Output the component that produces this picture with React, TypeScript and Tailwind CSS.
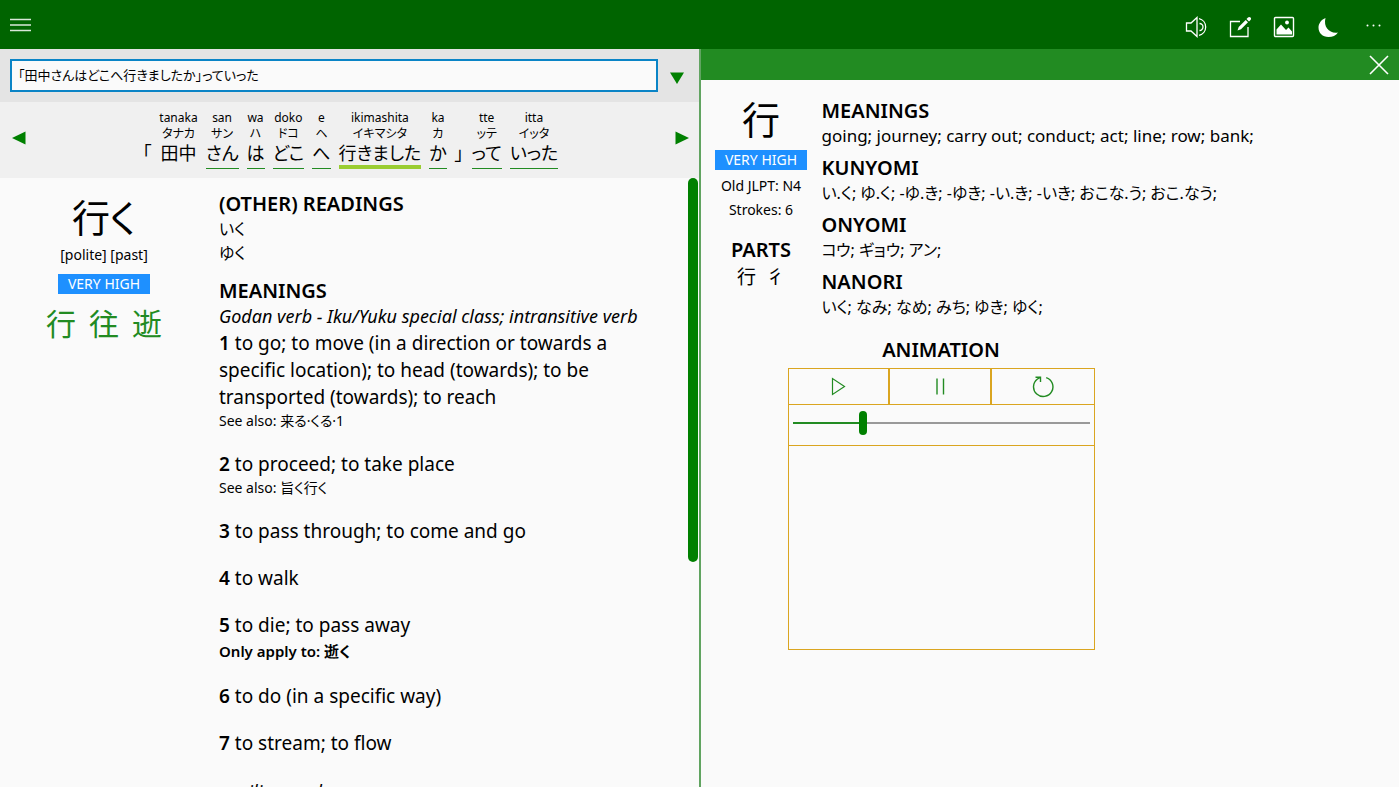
import { useState, type ReactNode } from 'react';

type Token = { romaji?: string; kana?: string; text: string; kind: 'plain' | 'word' | 'active' };

const tokens: Token[] = [
  { text: '「', kind: 'plain' },
  { romaji: 'tanaka', kana: 'タナカ', text: '田中', kind: 'plain' },
  { romaji: 'san', kana: 'サン', text: 'さん', kind: 'word' },
  { romaji: 'wa', kana: 'ハ', text: 'は', kind: 'word' },
  { romaji: 'doko', kana: 'ドコ', text: 'どこ', kind: 'word' },
  { romaji: 'e', kana: 'ヘ', text: 'へ', kind: 'word' },
  { romaji: 'ikimashita', kana: 'イキマシタ', text: '行きました', kind: 'active' },
  { romaji: 'ka', kana: 'カ', text: 'か', kind: 'word' },
  { text: '」', kind: 'plain' },
  { romaji: 'tte', kana: 'ッテ', text: 'って', kind: 'word' },
  { romaji: 'itta', kana: 'イッタ', text: 'いった', kind: 'word' },
];

const underline = {
  plain: '',
  word: 'border-b border-[#228b22]',
  active: 'border-b-4 border-[#9acd32]',
};

const senses: { text: string; seeAlso?: string; only?: string }[] = [
  {
    text: 'to go; to move (in a direction or towards a specific location); to head (towards); to be transported (towards); to reach',
    seeAlso: '来る·くる·1',
  },
  { text: 'to proceed; to take place', seeAlso: '旨く行く' },
  { text: 'to pass through; to come and go' },
  { text: 'to walk' },
  { text: 'to die; to pass away', only: '逝く' },
  { text: 'to do (in a specific way)' },
  { text: 'to stream; to flow' },
];

const meanings = 'going; journey; carry out; conduct; act; line; row; bank;';

const readings = [
  { title: 'KUNYOMI', body: 'い.く; ゆ.く; -ゆ.き; -ゆき; -い.き; -いき; おこな.う; おこ.なう;' },
  { title: 'ONYOMI', body: 'コウ; ギョウ; アン;' },
  { title: 'NANORI', body: 'いく; なみ; なめ; みち; ゆき; ゆく;' },
];

function Heading({ children }: { children: ReactNode }) {
  return <h2 className="text-[20px] leading-[26px] font-semibold">{children}</h2>;
}

function Badge() {
  return (
    <span className="flex h-5 w-[92px] items-center justify-center bg-[#1e90ff] text-[14px] leading-5 text-white">
      VERY HIGH
    </span>
  );
}

function IconButton({ label, children }: { label: string; children: ReactNode }) {
  return (
    <button type="button" aria-label={label} className="flex w-11 items-center justify-center text-white">
      {children}
    </button>
  );
}

function Toolbar() {
  return (
    <header className="flex h-[49px] shrink-0 items-stretch justify-between bg-[#006400] pr-[5px]">
      <button type="button" aria-label="Menu" className="flex w-[42px] items-center justify-center text-[#d9e8d9]">
        <svg width="22" height="14" viewBox="0 0 22 14" stroke="currentColor" strokeWidth="1.300">
          <path d="M0 1.500h21M0 7h21M0 12.500h21" />
        </svg>
      </button>
      <div className="flex pt-1">
        <IconButton label="Read aloud">
          <svg width="22" height="22" viewBox="0 0 22 22" fill="none" stroke="currentColor" strokeWidth="1.300">
            <path d="M1.500 7h4.500L12 1.500v19L6 15H1.500z" />
            <path d="M14.500 7.500a3.500 3.500 0 0 1 0 7" />
            <path d="M14 2.700a8.500 8.500 0 0 1 0 16.600" />
          </svg>
        </IconButton>
        <IconButton label="Edit">
          <svg width="22" height="22" viewBox="0 0 22 22" fill="none" stroke="currentColor" strokeWidth="1.300">
            <path d="M11 5.500H1.500v15h17.500V11" />
            <path d="M8.500 14.500l1.200-3.500 7-7 2.300 2.300-7 7z" fill="currentColor" stroke="none" />
            <path d="M17.500 3l1.500-1.500a1.600 1.600 0 0 1 2.500 2.500L20 5.500z" fill="currentColor" stroke="none" />
          </svg>
        </IconButton>
        <IconButton label="Picture">
          <svg width="22" height="22" viewBox="0 0 22 22" fill="none" stroke="currentColor" strokeWidth="1.400">
            <rect x="1.500" y="1.500" width="19" height="19" rx="1" />
            <path d="M3.500 18.500v-5l4.500-5 5 5.500 2.500-2.500 3.500 4v3z" fill="currentColor" stroke="none" />
            <circle cx="14" cy="6.500" r="1.900" fill="currentColor" stroke="none" />
          </svg>
        </IconButton>
        <IconButton label="Dark mode">
          <svg width="22" height="22" viewBox="0 0 22 22" fill="currentColor">
            <path d="M8.500 2C4.500 3.500 1.500 7.500 1.500 11.500c0 5.500 4 9.500 10 9.500 4 0 7.500-1.500 9.500-4.500-8 1.500-15-5-12.500-14.500z" />
          </svg>
        </IconButton>
        <IconButton label="More">
          <svg width="22" height="22" viewBox="0 0 22 22" fill="currentColor">
            <circle cx="6.500" cy="9.500" r="1" />
            <circle cx="12.500" cy="9.500" r="1" />
            <circle cx="18.500" cy="9.500" r="1" />
          </svg>
        </IconButton>
      </div>
    </header>
  );
}

function SearchRow() {
  return (
    <form className="flex h-[53px] shrink-0 items-center bg-[#e4e4e4] pl-[10px]">
      <input
        type="text"
        aria-label="Sentence"
        defaultValue="「田中さんはどこへ行きましたか」っていった"
        className="h-[33px] min-w-0 flex-1 border-2 border-[#0a84c6] bg-[#fafafa] px-[6px] pb-[2px] text-[13px] text-black outline-none"
      />
      <button type="button" aria-label="History" className="flex w-[41px] justify-center pt-1 pr-[2px] text-[#008000]">
        <svg width="14" height="12" viewBox="0 0 14 12" fill="currentColor">
          <path d="M0 0.500h14L7 12z" />
        </svg>
      </button>
    </form>
  );
}

function TokenStrip() {
  return (
    <div className="flex h-[76px] shrink-0 items-center justify-between bg-[#f0f0f0] pr-[10px] pb-1 pl-3">
      <button type="button" aria-label="Previous" className="text-[#008000]">
        <svg width="14" height="14" viewBox="0 0 14 14" fill="currentColor">
          <path d="M13.500 0.500v13L0 7z" />
        </svg>
      </button>
      <ol className="flex gap-2 pt-[3px]">
        {tokens.map((token, index) => (
          <li key={index} className="flex flex-col items-center text-center">
            <span className="h-4 text-[12px] leading-4">{token.romaji}</span>
            <span className="h-4 text-[12px] leading-4">{token.kana}</span>
            <span className={`h-[27px] w-full text-[18px] leading-[22px] ${underline[token.kind]}`}>{token.text}</span>
          </li>
        ))}
      </ol>
      <button type="button" aria-label="Next" className="text-[#008000]">
        <svg width="14" height="14" viewBox="0 0 14 14" fill="currentColor">
          <path d="M0.500 0.500v13L14 7z" />
        </svg>
      </button>
    </div>
  );
}

function WordEntry() {
  return (
    <article className="relative min-h-0 flex-1 overflow-hidden">
      <div className="flex h-full overflow-hidden pt-[13px] pr-[60px]">
        <div className="flex w-[208px] shrink-0 flex-col items-center">
          <h1 className="text-[38px] leading-[52px]">行く</h1>
          <p className="text-[14px] leading-6">[polite] [past]</p>
          <div className="pt-[7px]">
            <Badge />
          </div>
          <div className="flex gap-[13px] pt-[13px] text-[30px] leading-[34px] text-[#228b22]">
            <a href="#行">行</a>
            <a href="#往">往</a>
            <a href="#逝">逝</a>
          </div>
        </div>
        <div className="min-w-0 flex-1 pl-[11px]">
          <Heading>(OTHER) READINGS</Heading>
          <p className="text-[16px] leading-6">いく</p>
          <p className="text-[16px] leading-6">ゆく</p>
          <div className="pt-[13px]">
            <Heading>MEANINGS</Heading>
            <p className="text-[18px] leading-6 whitespace-nowrap italic">Godan verb - Iku/Yuku special class; intransitive verb</p>
          </div>
          <ol className="flex flex-col gap-5 pt-[2px]">
            {senses.map((sense, index) => (
              <li key={index}>
                <p className="text-[19px] leading-[27px]">
                  <b className="font-semibold">{index + 1}</b> {sense.text}
                </p>
                {sense.seeAlso && <p className="text-[14px] leading-5">See also: {sense.seeAlso}</p>}
                {sense.only && <p className="text-[15px] leading-6 font-semibold">Only apply to: {sense.only}</p>}
              </li>
            ))}
          </ol>
          <p className="pt-[22px] text-[18px] leading-6 italic">auxiliary verb</p>
        </div>
      </div>
      <div className="absolute top-0 right-[1px] h-[63%] w-[10px] rounded-full bg-[#008000]" />
    </article>
  );
}

function AnimationPanel() {
  const [progress, setProgress] = useState(23);
  return (
    <section className="flex w-[307px] flex-col">
      <div className="text-center">
        <Heading>ANIMATION</Heading>
      </div>
      <div className="mt-[5px] border border-[#daa520]">
        <div className="grid h-9 grid-cols-3 divide-x-2 divide-[#daa520] border-b border-[#daa520] text-[#228b22]">
          <button type="button" aria-label="Play" className="flex items-center justify-center">
            <svg width="20" height="20" viewBox="0 0 20 20" fill="none" stroke="currentColor" strokeWidth="1.200">
              <path d="M4.500 1.500v16L16.500 9.500z" />
            </svg>
          </button>
          <button type="button" aria-label="Pause" className="flex items-center justify-center">
            <svg width="20" height="20" viewBox="0 0 20 20" fill="none" stroke="currentColor" strokeWidth="1.400">
              <path d="M7 1.500v16M13.500 1.500v16" />
            </svg>
          </button>
          <button type="button" aria-label="Restart" className="flex items-center justify-center">
            <svg width="22" height="22" viewBox="0 0 22 22" fill="none" stroke="currentColor" strokeWidth="1.400">
              <path d="M14.200 1.600A9.700 9.700 0 1 1 5.500 3L8.300 1.300" />
              <path d="M3.500 1.300h5v4.700" />
            </svg>
          </button>
        </div>
        <div className="flex h-[41px] items-center border-b border-[#daa520] px-1 pb-1">
          <input
            type="range"
            aria-label="Animation progress"
            min={0}
            max={100}
            value={progress}
            onChange={(event) => setProgress(Number(event.target.value))}
            style={{ backgroundImage: `linear-gradient(to right, #228b22 ${progress}%, #999999 ${progress}%)` }}
            className="h-[2px] w-full appearance-none outline-none [&::-webkit-slider-thumb]:h-6 [&::-webkit-slider-thumb]:w-2 [&::-webkit-slider-thumb]:appearance-none [&::-webkit-slider-thumb]:rounded-full [&::-webkit-slider-thumb]:bg-[#008000]"
          />
        </div>
        <div className="h-[203px]" />
      </div>
    </section>
  );
}

function KanjiPane() {
  return (
    <aside className="flex min-w-0 flex-1 flex-col border-l-2 border-[#61a461] bg-[#fafafa]">
      <div className="flex h-[31px] shrink-0 items-center justify-end bg-[#228b22] pr-[10px]">
        <button type="button" aria-label="Close" className="text-white">
          <svg width="20" height="20" viewBox="0 0 20 20" fill="none" stroke="currentColor" strokeWidth="1.600">
            <path d="M1 1l18 18M19 1L1 19" />
          </svg>
        </button>
      </div>
      <div className="flex pt-[18px]">
        <div className="flex w-[121px] shrink-0 flex-col items-center">
          <h1 className="text-[38px] leading-[42px]">行</h1>
          <div className="pt-[10px]">
            <Badge />
          </div>
          <p className="pt-1 text-[14px] leading-6">Old JLPT: N4</p>
          <p className="text-[14px] leading-6">Strokes: 6</p>
          <div className="pt-[15px] text-center">
            <Heading>PARTS</Heading>
            <p className="flex justify-center gap-[10px] text-[19px] leading-7">
              <span>行</span>
              <span>彳</span>
            </p>
          </div>
        </div>
        <div className="flex min-w-0 flex-1 flex-col gap-[7px]">
          <div>
            <Heading>MEANINGS</Heading>
            <p className="text-[17px] leading-6">{meanings}</p>
          </div>
          {readings.map((reading) => (
            <div key={reading.title}>
              <Heading>{reading.title}</Heading>
              <p className="text-[16px] leading-6">{reading.body}</p>
            </div>
          ))}
        </div>
      </div>
      <div className="pt-[18px] pl-[87px]">
        <AnimationPanel />
      </div>
    </aside>
  );
}

export default function App() {
  return (
    <div
      lang="ja"
      className="flex h-screen flex-col overflow-hidden bg-[#fafafa] font-['Noto_Sans','Noto_Sans_CJK_JP',sans-serif] text-black [font-feature-settings:'palt']"
    >
      <Toolbar />
      <main className="flex min-h-0 flex-1">
        <section className="flex min-w-0 flex-1 flex-col">
          <SearchRow />
          <TokenStrip />
          <WordEntry />
        </section>
        <KanjiPane />
      </main>
    </div>
  );
}
